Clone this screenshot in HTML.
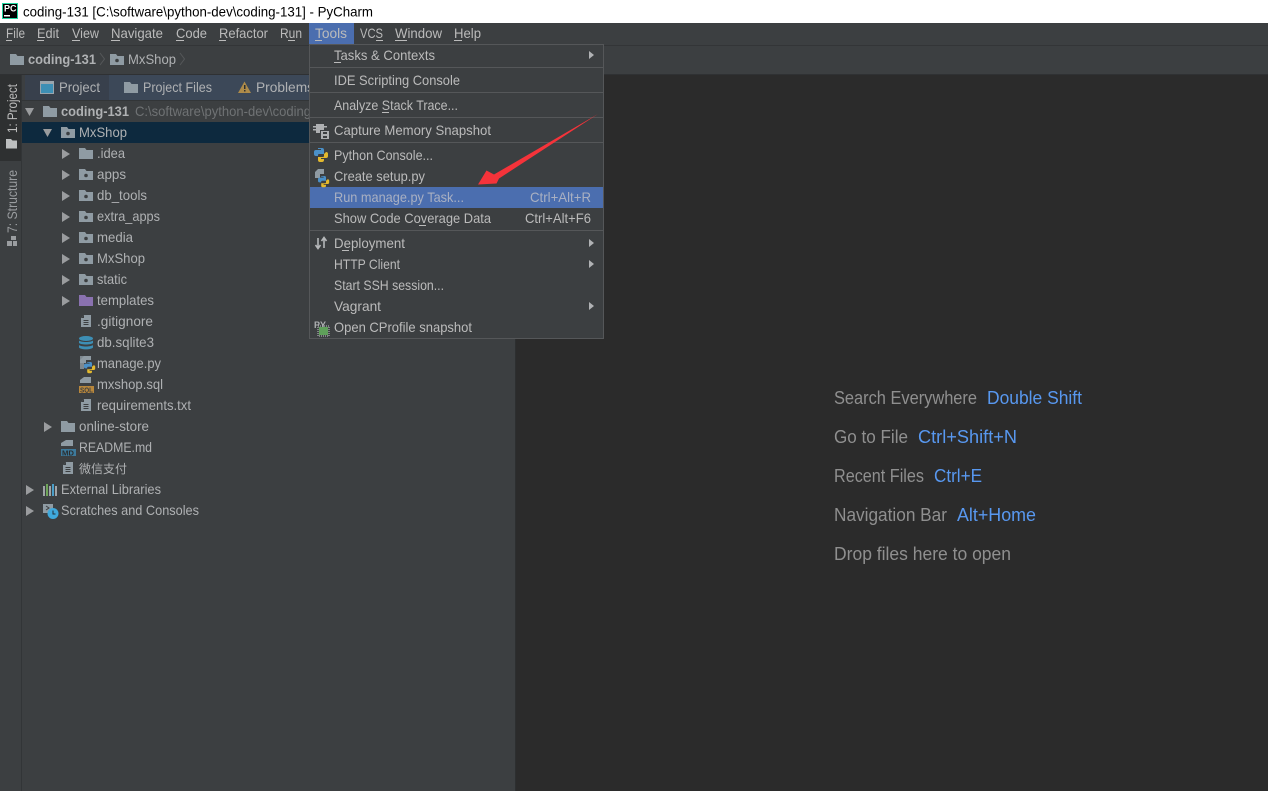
<!DOCTYPE html>
<html><head><meta charset="utf-8"><title>coding-131 - PyCharm</title>
<style>
html,body{margin:0;padding:0;background:#3c3f41;overflow:hidden}
svg{display:block}
text{font-family:"Liberation Sans","Noto Sans CJK SC",sans-serif;font-size:14px;fill:#afb1b3;white-space:pre}
.m text,text.m{fill:#bbbbbb}
.w{font-size:18px;fill:#8f8f8f}
.b{font-size:18px;fill:#5898f0}
</style></head><body>
<svg width="1268" height="791" viewBox="0 0 1268 791" xmlns="http://www.w3.org/2000/svg">
<defs>
<g id="fo"><path d="M0 1h6l1.500 2H14v9H0z" fill="#8f9ba3"/></g>
<g id="fm"><path d="M0 1h6l1.500 2H14v9H0z" fill="#8f9ba3"/><circle cx="7" cy="7.500" r="1.800" fill="#3c3f41"/></g>
<g id="ft"><path d="M0 1h6l1.500 2H14v9H0z" fill="#8a72b0"/></g>
<g id="fi"><path d="M3 0h7v12H0V3z" fill="#8f9ba3"/><path d="M3 0v3H0z" fill="#3c3f41"/><path d="M2.500 5.500h5M2.500 7.500h5M2.500 9.500h5" stroke="#3c3f41" stroke-width="1"/></g>
<g id="ar"><path d="M0 0l8 5-8 5z" fill="#9a9c9e"/></g>
<g id="ad"><path d="M0 0h9l-4.500 8z" fill="#9a9c9e"/></g>
<g id="sm"><path d="M0 0l5 4-5 4z" fill="#b0b2b4"/></g>
<g id="py"><path d="M4 0h4a2 2 0 0 1 2 2v4H5a1 1 0 0 0-1 1v1H2a2 2 0 0 1-2-2V4a2 2 0 0 1 2-2h5V1H4z" fill="#4a90c8"/><path d="M12 4h0a2 2 0 0 1 2 2v2a2 2 0 0 1-2 2H7v1h3v1a2 2 0 0 1-2 2H6a2 2 0 0 1-2-2V9h5a1 1 0 0 0 1-1V6z" fill="#e3b92e"/></g>
</defs>

<!-- base -->
<rect width="1268" height="791" fill="#3c3f41"/>
<rect x="516" y="75" width="752" height="716" fill="#2b2b2b"/>
<rect x="515" y="75" width="1" height="716" fill="#2d2f30"/>

<!-- title bar -->
<rect width="1268" height="23" fill="#ffffff"/>
<rect x="2.500" y="3.500" width="15" height="15" fill="#000" stroke="#1fd6a0"/>
<text x="4" y="11.500" style="font-size:9px;font-weight:bold;fill:#fff">PC</text>
<rect x="4" y="15" width="6" height="1.500" fill="#fff"/>
<text x="23" y="16.500" textLength="350" lengthAdjust="spacingAndGlyphs" style="fill:#000">coding-131 [C:\software\python-dev\coding-131] - PyCharm</text>

<!-- menu bar -->
<rect x="0" y="45" width="1268" height="1" fill="#333537"/>
<rect x="309" y="23" width="45" height="21" fill="#4b6eaf"/>
<g class="m">
<text x="6" y="38" textLength="19" lengthAdjust="spacingAndGlyphs">File</text>
<text x="37" y="38" textLength="22" lengthAdjust="spacingAndGlyphs">Edit</text>
<text x="72" y="38" textLength="27" lengthAdjust="spacingAndGlyphs">View</text>
<text x="111" y="38" textLength="52" lengthAdjust="spacingAndGlyphs">Navigate</text>
<text x="176" y="38" textLength="31" lengthAdjust="spacingAndGlyphs">Code</text>
<text x="219" y="38" textLength="49" lengthAdjust="spacingAndGlyphs">Refactor</text>
<text x="280" y="38" textLength="22" lengthAdjust="spacingAndGlyphs">Run</text>
<text x="315" y="38" textLength="32" lengthAdjust="spacingAndGlyphs">Tools</text>
<text x="360" y="38" textLength="23" lengthAdjust="spacingAndGlyphs">VCS</text>
<text x="395" y="38" textLength="47" lengthAdjust="spacingAndGlyphs">Window</text>
<text x="454" y="38" textLength="27" lengthAdjust="spacingAndGlyphs">Help</text>
</g>
<g fill="#bbb">
<rect x="6" y="40" width="6" height="1"/><rect x="37" y="40" width="7" height="1"/><rect x="72" y="40" width="8" height="1"/><rect x="111" y="40" width="9" height="1"/><rect x="176" y="40" width="8" height="1"/><rect x="219" y="40" width="7" height="1"/><rect x="288" y="40" width="7" height="1"/><rect x="315" y="40" width="7" height="1"/><rect x="376" y="40" width="7" height="1"/><rect x="395" y="40" width="12" height="1"/><rect x="454" y="40" width="8" height="1"/>
</g>

<!-- nav bar -->
<rect x="0" y="74" width="1268" height="1" fill="#2f3133"/>
<use href="#fo" x="10" y="53"/>
<text x="28" y="64" textLength="68" lengthAdjust="spacingAndGlyphs" style="font-weight:bold;fill:#afb1b3">coding-131</text>
<path d="M100 53l4.500 6-4.500 6" fill="none" stroke="#55585a"/>
<use href="#fm" x="110" y="53"/>
<text x="128" y="64" textLength="48" lengthAdjust="spacingAndGlyphs">MxShop</text>
<path d="M180 53l4.500 6-4.500 6" fill="none" stroke="#55585a"/>

<!-- left strip -->
<rect x="0" y="75" width="21" height="86" fill="#2e3031"/>
<rect x="21" y="75" width="1" height="716" fill="#323537"/>
<text transform="translate(17,133) rotate(-90)" textLength="49" lengthAdjust="spacingAndGlyphs" class="m">1: Project</text>
<path d="M6 139h5l1.500 1.500H17v8H6z" fill="#bdbfc0"/>
<text transform="translate(17,233) rotate(-90)" textLength="63" lengthAdjust="spacingAndGlyphs" style="fill:#9a9da0">7: Structure</text>
<path d="M7 241h5v5H7zM13 241h4v5h-4zM11 236h5v4h-5z" fill="#9a9da0"/>

<!-- tab bar -->
<rect x="22" y="75" width="494" height="25" fill="#3c4858"/>
<rect x="22" y="75" width="3" height="25" fill="#3c3f41"/>
<rect x="25" y="75" width="84" height="25" fill="#38404c"/>
<rect x="22" y="100" width="494" height="1" fill="#323537"/>
<rect x="40.500" y="81.500" width="13" height="12" fill="#3d8fb5" stroke="#9aa5ad"/>
<rect x="41" y="82" width="12" height="2" fill="#9aa5ad"/>
<text x="59" y="92" textLength="41" lengthAdjust="spacingAndGlyphs">Project</text>
<use href="#fo" x="124" y="81"/>
<text x="143" y="92" textLength="69" lengthAdjust="spacingAndGlyphs">Project Files</text>
<path d="M244.500 81.500l6.500 11.500h-13z" fill="#ae8b49"/>
<rect x="244" y="85" width="1.500" height="4" fill="#2d2f30"/><rect x="244" y="90" width="1.500" height="1.500" fill="#2d2f30"/>
<text x="256" y="92" textLength="58" lengthAdjust="spacingAndGlyphs">Problems</text>

<!-- selected -->
<rect x="22" y="122" width="494" height="21" fill="#0d293e"/>

<!-- tree -->
<use href="#ad" x="25" y="108"/>
<use href="#fo" x="43" y="105"/>
<text x="61" y="116" textLength="68" lengthAdjust="spacingAndGlyphs" style="font-weight:bold">coding-131</text>
<text x="135" y="116" textLength="176" lengthAdjust="spacingAndGlyphs" style="fill:#6f7274">C:\software\python-dev\coding</text>

<use href="#ad" x="43" y="129"/>
<use href="#fm" x="61" y="126"/>
<text x="79" y="137" textLength="48" lengthAdjust="spacingAndGlyphs">MxShop</text>

<use href="#ar" x="62" y="149"/><use href="#fo" x="79" y="147"/><text x="97" y="158" textLength="28" lengthAdjust="spacingAndGlyphs">.idea</text>
<use href="#ar" x="62" y="170"/><use href="#fm" x="79" y="168"/><text x="97" y="179" textLength="29" lengthAdjust="spacingAndGlyphs">apps</text>
<use href="#ar" x="62" y="191"/><use href="#fm" x="79" y="189"/><text x="97" y="200" textLength="50" lengthAdjust="spacingAndGlyphs">db_tools</text>
<use href="#ar" x="62" y="212"/><use href="#fm" x="79" y="210"/><text x="97" y="221" textLength="63" lengthAdjust="spacingAndGlyphs">extra_apps</text>
<use href="#ar" x="62" y="233"/><use href="#fm" x="79" y="231"/><text x="97" y="242" textLength="36" lengthAdjust="spacingAndGlyphs">media</text>
<use href="#ar" x="62" y="254"/><use href="#fm" x="79" y="252"/><text x="97" y="263" textLength="48" lengthAdjust="spacingAndGlyphs">MxShop</text>
<use href="#ar" x="62" y="275"/><use href="#fm" x="79" y="273"/><text x="97" y="284" textLength="30" lengthAdjust="spacingAndGlyphs">static</text>
<use href="#ar" x="62" y="296"/><use href="#ft" x="79" y="294"/><text x="97" y="305" textLength="57" lengthAdjust="spacingAndGlyphs">templates</text>
<use href="#fi" x="81" y="315"/><text x="97" y="326" textLength="56" lengthAdjust="spacingAndGlyphs">.gitignore</text>
<g transform="translate(79,336)"><ellipse cx="7" cy="2.500" rx="7" ry="2.500" fill="#3d8fb5"/><path d="M0 4.500c2 2 12 2 14 0v2.500c-2 2-12 2-14 0zM0 9c2 2 12 2 14 0v2.500c-2 2.500-12 2.500-14 0z" fill="#3d8fb5"/></g>
<text x="97" y="347" textLength="57" lengthAdjust="spacingAndGlyphs">db.sqlite3</text>
<path d="M84 356h7v4h-5v3h-6v-3z" fill="#8f9ba3"/><rect x="80" y="356" width="4" height="13" fill="#8f9ba3" opacity=".8"/>
<g transform="translate(84,362) scale(.8)"><use href="#py"/></g>
<text x="97" y="368" textLength="64" lengthAdjust="spacingAndGlyphs">manage.py</text>
<path d="M84 377h7v6H80v-3z" fill="#8f9ba3"/><rect x="79" y="386" width="15" height="7" fill="#b8873c"/>
<text x="80" y="392.500" textLength="13" lengthAdjust="spacingAndGlyphs" style="font-size:7px;font-weight:bold;fill:#3c3f41">SQL</text>
<text x="97" y="389" textLength="66" lengthAdjust="spacingAndGlyphs">mxshop.sql</text>
<use href="#fi" x="81" y="399"/><text x="97" y="410" textLength="94" lengthAdjust="spacingAndGlyphs">requirements.txt</text>

<use href="#ar" x="44" y="422"/><use href="#fo" x="61" y="420"/><text x="79" y="431" textLength="70" lengthAdjust="spacingAndGlyphs">online-store</text>
<path d="M66 440h7v6H61v-3z" fill="#8f9ba3"/><rect x="61" y="449" width="15" height="7" fill="#3d7a9c"/>
<text x="62" y="455.500" textLength="12" lengthAdjust="spacingAndGlyphs" style="font-size:7px;font-weight:bold;fill:#2b2d2e">MD</text>
<text x="79" y="452" textLength="73" lengthAdjust="spacingAndGlyphs">README.md</text>
<use href="#fi" x="63" y="462"/>
<text x="79" y="473" textLength="48" lengthAdjust="spacingAndGlyphs" style="font-family:'Noto Sans CJK SC',sans-serif;font-size:12px">微信支付</text>
<use href="#ar" x="26" y="485"/>
<path d="M43 486h2v10h-2z" fill="#a0a4a8"/><path d="M46 484h2v12h-2z" fill="#6fa55a"/><path d="M49 486h2v10h-2z" fill="#a0a4a8"/><path d="M52 484h2v12h-2z" fill="#4a9ec8"/><path d="M55 486h2v10h-2z" fill="#a0a4a8"/>
<text x="61" y="494" textLength="100" lengthAdjust="spacingAndGlyphs">External Libraries</text>
<use href="#ar" x="26" y="506"/>
<path d="M43 504h10v9H43z" fill="#8f9ba3"/><path d="M46 506l3 2-3 2" fill="none" stroke="#3c3f41"/>
<circle cx="53" cy="513.500" r="5.500" fill="#3fa9dc"/><path d="M53 510.500v3.500h2.500" fill="none" stroke="#22303a"/>
<text x="61" y="515" textLength="138" lengthAdjust="spacingAndGlyphs">Scratches and Consoles</text>

<!-- welcome -->
<text class="w" x="834" y="404" textLength="143" lengthAdjust="spacingAndGlyphs">Search Everywhere</text>
<text class="b" x="987" y="404" textLength="95" lengthAdjust="spacingAndGlyphs">Double Shift</text>
<text class="w" x="834" y="443" textLength="74" lengthAdjust="spacingAndGlyphs">Go to File</text>
<text class="b" x="918" y="443" textLength="99" lengthAdjust="spacingAndGlyphs">Ctrl+Shift+N</text>
<text class="w" x="834" y="482" textLength="90" lengthAdjust="spacingAndGlyphs">Recent Files</text>
<text class="b" x="934" y="482" textLength="48" lengthAdjust="spacingAndGlyphs">Ctrl+E</text>
<text class="w" x="834" y="521" textLength="113" lengthAdjust="spacingAndGlyphs">Navigation Bar</text>
<text class="b" x="957" y="521" textLength="79" lengthAdjust="spacingAndGlyphs">Alt+Home</text>
<text class="w" x="834" y="560" textLength="177" lengthAdjust="spacingAndGlyphs">Drop files here to open</text>

<!-- tools menu -->
<rect x="309.500" y="44.500" width="294" height="294" fill="#3c3f41" stroke="#555759"/>
<g fill="#555759">
<rect x="310" y="67" width="293" height="1"/><rect x="310" y="92" width="293" height="1"/><rect x="310" y="117" width="293" height="1"/><rect x="310" y="142" width="293" height="1"/><rect x="310" y="230" width="293" height="1"/>
</g>
<rect x="310" y="187" width="293" height="21" fill="#4b6eaf"/>
<g class="m">
<text x="334" y="60" textLength="101" lengthAdjust="spacingAndGlyphs">Tasks &amp; Contexts</text>
<text x="334" y="85" textLength="126" lengthAdjust="spacingAndGlyphs">IDE Scripting Console</text>
<text x="334" y="110" textLength="124" lengthAdjust="spacingAndGlyphs">Analyze Stack Trace...</text>
<text x="334" y="135" textLength="157" lengthAdjust="spacingAndGlyphs">Capture Memory Snapshot</text>
<text x="334" y="160" textLength="99" lengthAdjust="spacingAndGlyphs">Python Console...</text>
<text x="334" y="181" textLength="91" lengthAdjust="spacingAndGlyphs">Create setup.py</text>
<text x="334" y="202" textLength="130" lengthAdjust="spacingAndGlyphs" style="fill:#a9b0c2">Run manage.py Task...</text>
<text x="530" y="202" textLength="61" lengthAdjust="spacingAndGlyphs" style="fill:#a9b0c2">Ctrl+Alt+R</text>
<text x="334" y="223" textLength="157" lengthAdjust="spacingAndGlyphs">Show Code Coverage Data</text>
<text x="525" y="223" textLength="66" lengthAdjust="spacingAndGlyphs">Ctrl+Alt+F6</text>
<text x="334" y="248" textLength="71" lengthAdjust="spacingAndGlyphs">Deployment</text>
<text x="334" y="269" textLength="66" lengthAdjust="spacingAndGlyphs">HTTP Client</text>
<text x="334" y="290" textLength="110" lengthAdjust="spacingAndGlyphs">Start SSH session...</text>
<text x="334" y="311" textLength="47" lengthAdjust="spacingAndGlyphs">Vagrant</text>
<text x="334" y="332" textLength="138" lengthAdjust="spacingAndGlyphs">Open CProfile snapshot</text>
</g>
<g fill="#bbb">
<rect x="334" y="62" width="7" height="1"/><rect x="382" y="112" width="7" height="1"/><rect x="419" y="225" width="7" height="1"/><rect x="342" y="250" width="7" height="1"/>
</g>
<use href="#sm" x="589" y="51"/><use href="#sm" x="589" y="239"/><use href="#sm" x="589" y="260"/><use href="#sm" x="589" y="302"/>

<!-- menu icons -->
<path d="M316 124h8v9h-8z" fill="#aeb0b2"/><path d="M313 126h3v1.500h-3zM313 129h3v1.500h-3zM324 126h3v1.500h-3z" fill="#aeb0b2"/>
<rect x="320" y="130" width="10" height="10" fill="#3c3f41"/>
<rect x="321" y="131" width="8" height="8" fill="#aeb0b2"/><rect x="323" y="132" width="4" height="2" fill="#3c3f41"/><rect x="323" y="136" width="4" height="2" fill="#3c3f41"/>
<use href="#py" x="314" y="148"/>
<path d="M318 169h6v5h-4v4h-5v-6z" fill="#8f9ba3"/>
<g transform="translate(318,176) scale(.8)"><use href="#py"/></g>
<path d="M318 238v10M315.500 245l2.500 3.500 2.500-3.500" fill="none" stroke="#b5b7b9" stroke-width="1.600"/><path d="M324 248v-10M321.500 241l2.500-3.500 2.500 3.500" fill="none" stroke="#b5b7b9" stroke-width="1.600"/>
<text x="314" y="328" textLength="12" lengthAdjust="spacingAndGlyphs" style="font-size:9px;font-weight:bold;fill:#aeb0b2">PY</text>
<rect x="319" y="327" width="9" height="8" fill="#5fa05a"/>
<rect x="318" y="326" width="11" height="10" fill="none" stroke="#c5c7c9" stroke-dasharray="1 1"/>

<!-- red annotation arrow -->
<path d="M478 184.500L486.500 170.500L494 174.500L598 114L499 178.500L496.500 183.500Z" fill="#f5333a"/>
</svg>
</body></html>
